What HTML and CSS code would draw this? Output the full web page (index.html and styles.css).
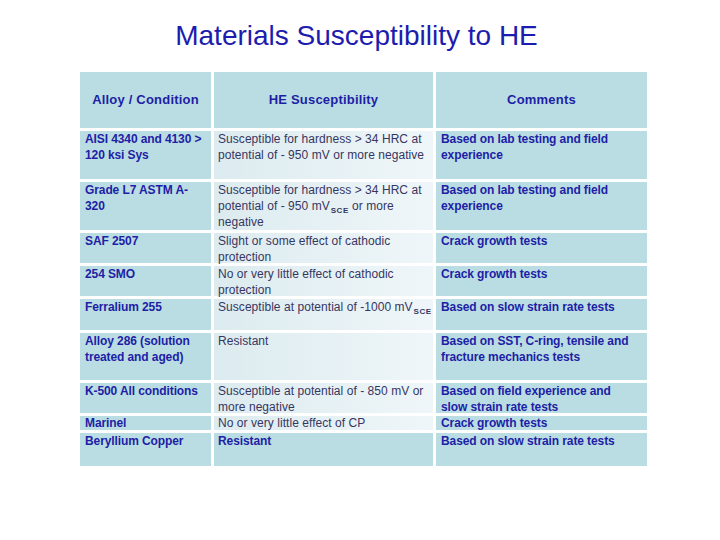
FILE: index.html
```html
<!DOCTYPE html>
<html>
<head>
<meta charset="utf-8">
<link rel="stylesheet" href="styles.css">
</head>
<body>
<h1 class="title">Materials Susceptibility to HE</h1>
<div class="grid">
  <div class="hd">Alloy / Condition</div>
  <div class="hd">HE Susceptibility</div>
  <div class="hd">Comments</div>

  <div class="c1">AISI 4340 and 4130 &gt; 120 ksi Sys</div>
  <div class="c2">Susceptible for hardness &gt; 34 HRC at potential of - 950 mV or more negative</div>
  <div class="c3">Based on lab testing and field experience</div>

  <div class="c1">Grade L7 ASTM A-320</div>
  <div class="c2">Susceptible for hardness &gt; 34 HRC at potential of - 950 mV<sub>SCE</sub> or more negative</div>
  <div class="c3">Based on lab testing and field experience</div>

  <div class="c1">SAF 2507</div>
  <div class="c2">Slight or some effect of cathodic protection</div>
  <div class="c3">Crack growth tests</div>

  <div class="c1">254 SMO</div>
  <div class="c2">No or very little effect of cathodic protection</div>
  <div class="c3">Crack growth tests</div>

  <div class="c1">Ferralium 255</div>
  <div class="c2 nowrap">Susceptible at potential of -1000 mV<sub>SCE</sub></div>
  <div class="c3">Based on slow strain rate tests</div>

  <div class="c1">Alloy 286 (solution treated and aged)</div>
  <div class="c2">Resistant</div>
  <div class="c3">Based on SST, C-ring, tensile and fracture mechanics tests</div>

  <div class="c1">K-500 All conditions</div>
  <div class="c2">Susceptible at potential of - 850 mV or more negative</div>
  <div class="c3">Based on field experience and slow strain rate tests</div>

  <div class="c1 tight">Marinel</div>
  <div class="c2 tight">No or very little effect of CP</div>
  <div class="c3 tight">Crack growth tests</div>

  <div class="c1">Beryllium Copper</div>
  <div class="c2 strong">Resistant</div>
  <div class="c3">Based on slow strain rate tests</div>
</div>
</body>
</html>
```
FILE: styles.css
```css
html, body {
  margin: 0;
  padding: 0;
  background: #ffffff;
}
body {
  width: 720px;
  height: 540px;
  font-family: "Liberation Sans", Arial, sans-serif;
}
.title {
  margin: 20px 0 0 0;
  padding-right: 7px;
  height: 32px;
  line-height: 32px;
  font-size: 28px;
  font-weight: normal;
  text-align: center;
  color: #1c1cae;
}
.grid {
  margin: 20px 0 0 80px;
  width: 567px;
  display: grid;
  grid-template-columns: 131px 219px 211px;
  grid-template-rows: 56px 48px 48px 30px 30px 31px 47px 30px 14px 33px;
  gap: 3px;
  font-size: 12px;
  line-height: 15.5px;
}
.hd {
  background: #b9dde2;
  display: flex;
  align-items: center;
  justify-content: center;
  font-weight: bold;
  font-size: 13px;
  letter-spacing: 0.2px;
  color: #1e1ea6;
  padding-bottom: 1px;
}
.c1, .c3 {
  background: #b9dde2;
  font-weight: bold;
  color: #1e1ea6;
  padding: 1px 4px 0 5px;
  letter-spacing: -0.1px;
}
.c3 {
  padding-right: 12px;
}
.c2 {
  background: linear-gradient(to right, #dcebef, #eff6f9);
  color: #363662;
  padding: 1px 3px 0 4px;
  letter-spacing: 0.05px;
}
.c2.nowrap {
  white-space: nowrap;
}
.c2.strong {
  background: #b9dde2;
  font-weight: bold;
  color: #1e1ea6;
  letter-spacing: -0.1px;
}
.tight {
  padding-top: 0;
}
sub {
  display: inline-block;
  font-size: 8px;
  line-height: 8px;
  font-weight: bold;
  vertical-align: -3px;
  letter-spacing: 0.5px;
  margin-left: 1px;
}
```
